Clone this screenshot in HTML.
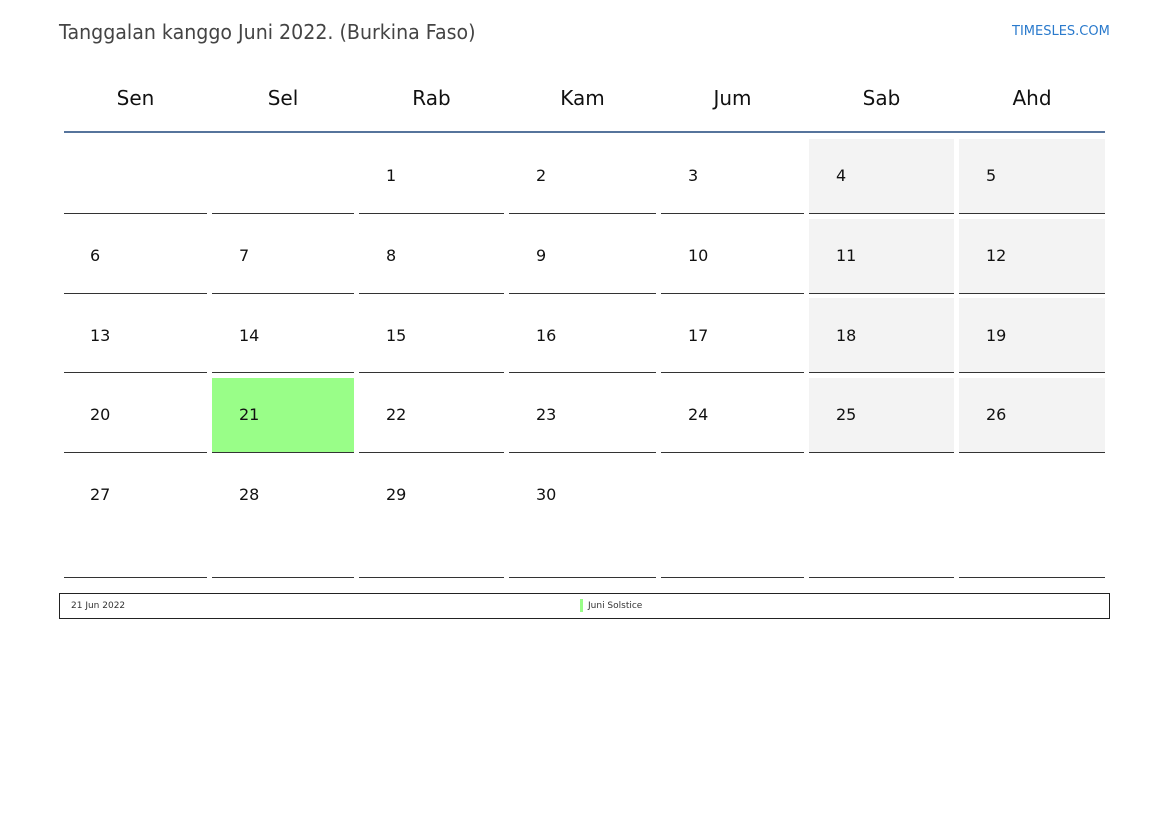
<!DOCTYPE html>
<html><head><meta charset="utf-8"><style>
body{margin:0;width:1169px;height:827px;background:#fff;position:relative;font-family:"DejaVu Sans","Liberation Sans",sans-serif;overflow:hidden}
div{position:absolute;box-sizing:border-box}
.t{left:59px;top:20px;font-size:20px;color:#444;transform:scaleX(0.95);transform-origin:left top;white-space:nowrap}
.ts{left:1012px;top:24px;font-size:13px;color:#2a7acc}
.h{top:86px;font-size:20px;color:#111;text-align:center}
.c{border-bottom:1px solid #333}
.g{background:#f3f3f3}
.n{font-size:16px;color:#111}
</style></head><body>
<div class="t">Tanggalan kanggo Juni 2022. (Burkina Faso)</div>
<div class="ts">TIMESLES.COM</div>
<div style="left:64px;top:131px;width:1041px;height:2px;background:#56749c"></div>
<div class="h" style="left:64px;width:143px">Sen</div>
<div class="h" style="left:212px;width:142px">Sel</div>
<div class="h" style="left:359px;width:145px">Rab</div>
<div class="h" style="left:509px;width:147px">Kam</div>
<div class="h" style="left:661px;width:143px">Jum</div>
<div class="h" style="left:809px;width:145px">Sab</div>
<div class="h" style="left:959px;width:146px">Ahd</div>

<div class="c" style="left:64px;top:139px;width:143px;height:75px"></div>
<div class="c" style="left:212px;top:139px;width:142px;height:75px"></div>
<div class="c" style="left:359px;top:139px;width:145px;height:75px"><div class="n" style="left:27px;top:27px">1</div></div>
<div class="c" style="left:509px;top:139px;width:147px;height:75px"><div class="n" style="left:27px;top:27px">2</div></div>
<div class="c" style="left:661px;top:139px;width:143px;height:75px"><div class="n" style="left:27px;top:27px">3</div></div>
<div class="c g" style="left:809px;top:139px;width:145px;height:75px"><div class="n" style="left:27px;top:27px">4</div></div>
<div class="c g" style="left:959px;top:139px;width:146px;height:75px"><div class="n" style="left:27px;top:27px">5</div></div>

<div class="c" style="left:64px;top:219px;width:143px;height:75px"><div class="n" style="left:26px;top:27px">6</div></div>
<div class="c" style="left:212px;top:219px;width:142px;height:75px"><div class="n" style="left:27px;top:27px">7</div></div>
<div class="c" style="left:359px;top:219px;width:145px;height:75px"><div class="n" style="left:27px;top:27px">8</div></div>
<div class="c" style="left:509px;top:219px;width:147px;height:75px"><div class="n" style="left:27px;top:27px">9</div></div>
<div class="c" style="left:661px;top:219px;width:143px;height:75px"><div class="n" style="left:27px;top:27px">10</div></div>
<div class="c g" style="left:809px;top:219px;width:145px;height:75px"><div class="n" style="left:27px;top:27px">11</div></div>
<div class="c g" style="left:959px;top:219px;width:146px;height:75px"><div class="n" style="left:27px;top:27px">12</div></div>

<div class="c" style="left:64px;top:298px;width:143px;height:75px"><div class="n" style="left:26px;top:28px">13</div></div>
<div class="c" style="left:212px;top:298px;width:142px;height:75px"><div class="n" style="left:27px;top:28px">14</div></div>
<div class="c" style="left:359px;top:298px;width:145px;height:75px"><div class="n" style="left:27px;top:28px">15</div></div>
<div class="c" style="left:509px;top:298px;width:147px;height:75px"><div class="n" style="left:27px;top:28px">16</div></div>
<div class="c" style="left:661px;top:298px;width:143px;height:75px"><div class="n" style="left:27px;top:28px">17</div></div>
<div class="c g" style="left:809px;top:298px;width:145px;height:75px"><div class="n" style="left:27px;top:28px">18</div></div>
<div class="c g" style="left:959px;top:298px;width:146px;height:75px"><div class="n" style="left:27px;top:28px">19</div></div>

<div class="c" style="left:64px;top:378px;width:143px;height:75px"><div class="n" style="left:26px;top:27px">20</div></div>
<div class="c" style="left:212px;top:378px;width:142px;height:75px;background:#99fe88"><div class="n" style="left:27px;top:27px">21</div></div>
<div class="c" style="left:359px;top:378px;width:145px;height:75px"><div class="n" style="left:27px;top:27px">22</div></div>
<div class="c" style="left:509px;top:378px;width:147px;height:75px"><div class="n" style="left:27px;top:27px">23</div></div>
<div class="c" style="left:661px;top:378px;width:143px;height:75px"><div class="n" style="left:27px;top:27px">24</div></div>
<div class="c g" style="left:809px;top:378px;width:145px;height:75px"><div class="n" style="left:27px;top:27px">25</div></div>
<div class="c g" style="left:959px;top:378px;width:146px;height:75px"><div class="n" style="left:27px;top:27px">26</div></div>

<div class="c" style="left:64px;top:457px;width:143px;height:121px"><div class="n" style="left:26px;top:28px">27</div></div>
<div class="c" style="left:212px;top:457px;width:142px;height:121px"><div class="n" style="left:27px;top:28px">28</div></div>
<div class="c" style="left:359px;top:457px;width:145px;height:121px"><div class="n" style="left:27px;top:28px">29</div></div>
<div class="c" style="left:509px;top:457px;width:147px;height:121px"><div class="n" style="left:27px;top:28px">30</div></div>
<div class="c" style="left:661px;top:457px;width:143px;height:121px"></div>
<div class="c" style="left:809px;top:457px;width:145px;height:121px"></div>
<div class="c" style="left:959px;top:457px;width:146px;height:121px"></div>

<div style="left:59px;top:593px;width:1051px;height:26px;border:1px solid #222"></div>
<div style="left:71px;top:601px;font-size:9px;color:#333">21 Jun 2022</div>
<div style="left:580px;top:599px;width:3px;height:13px;background:#99fe88"></div>
<div style="left:588px;top:601px;font-size:9px;color:#333">Juni Solstice</div>
</body></html>
